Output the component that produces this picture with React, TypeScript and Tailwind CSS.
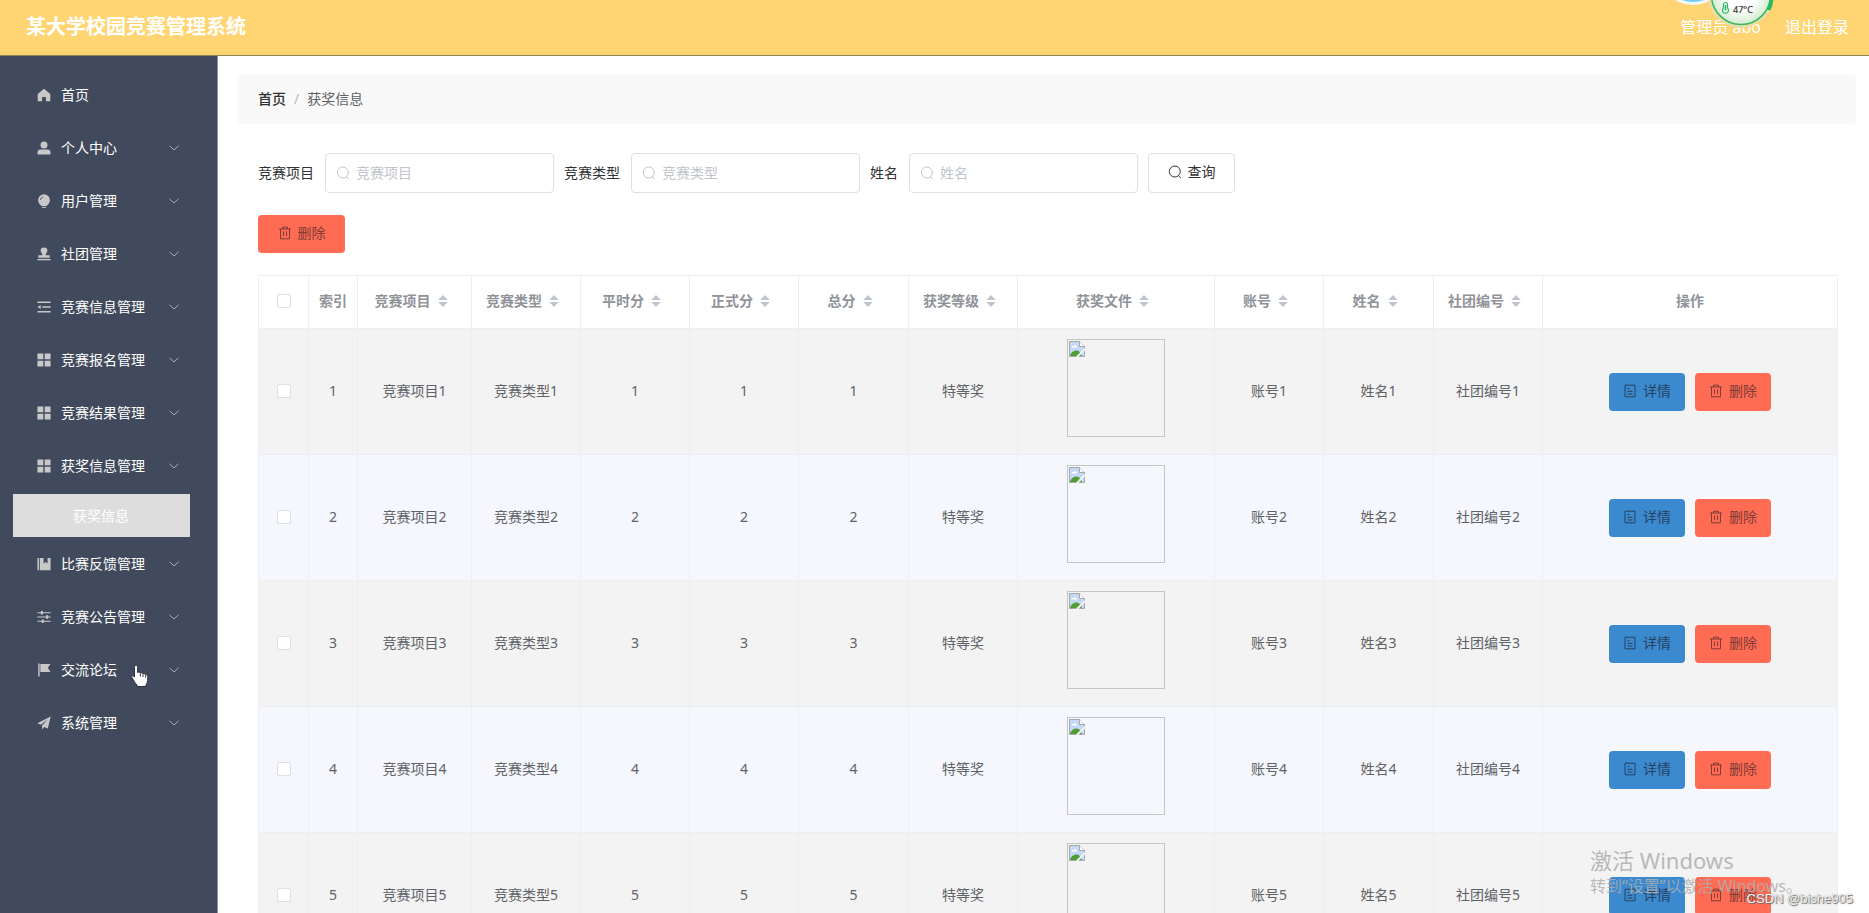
import { useState, type ReactNode } from 'react';

const CELL = 'border-r border-b border-[#ebeef5] px-2 pb-0.5 text-center';

const icons: Record<string, ReactNode> = {
  home: <path d="M8 .8.8 6.8V15H5.800V10.2H10.200V15H15.200V6.8Z" />,
  user: (
    <>
      <circle cx="8" cy="4.600" r="4" />
      <path d="M.600 15.400V12.600C.600 10.800 2 9.600 3.800 9.600H12.200C14 9.600 15.400 10.800 15.400 12.600V15.400Z" />
    </>
  ),
  bulb: (
    <>
      <path d="M8 .3a6.800 6.800 0 0 0-6.800 6.800c0 2.900 2 5 4.200 6.700h5.200c2.200-1.700 4.200-3.800 4.200-6.700A6.800 6.800 0 0 0 8 .3Z" />
      <path d="M5.600 14.600h4.800v1.200H5.600Z" />
      <path d="M4 6.800C4.200 5 5.400 3.800 7 3.500" fill="none" stroke="#414a5c" strokeWidth="1" />
    </>
  ),
  stamp: (
    <>
      <path d="M8 .5a3.900 3.900 0 0 0-3.900 3.900c0 1.800 2 2.900 2 4.700v.4H1.500v2.700h13V9.500H9.900v-.4c0-1.800 2-2.900 2-4.700A3.900 3.900 0 0 0 8 .5Z" />
      <path d="M.5 13.600h15V15.200H.5Z" />
    </>
  ),
  fold: (
    <>
      <path d="M.5 1.800h15v1.700H.5ZM6 7.200h9.500v1.700H6ZM.5 12.600h15v1.700H.5Z" />
      <path d="M.5 8 4.200 5.600v4.800Z" />
    </>
  ),
  grid: <path d="M.5.500h6.700v6.700H.5ZM8.800.500h6.700v6.700H8.800ZM.5 8.800h6.700v6.700H.5ZM8.800 8.800h6.700v6.700H8.800Z" />,
  book: <path d="M.5 1h1.700v14H.5ZM3.200 1h4.300v6.400l2.300-1.700 2.300 1.700V1h3.400v14H3.200Z" />,
  sliders: (
    <>
      <path d="M.5 2.600h15v1.200H.5ZM.5 7.400h15v1.200H.5ZM.5 12.200h15v1.200H.5Z" />
      <path d="M4.400 1.200h2.400v4H4.400ZM10.400 6h2.400v4h-2.400ZM5.400 10.800h2.400v4H5.400Z" />
    </>
  ),
  flag: <path d="M1.400.500H3v15H1.400ZM3.800 1h11.600L12.400 5.500l3 4.700H3.800Z" />,
  plane: <path d="M15.600.5.400 8.400l4 1.700L12.200 4 5.800 10.800v4.600l2.400-2.900 4.200 1.900Z" />,
};

const menu = [
  { icon: 'home', label: '首页' },
  { icon: 'user', label: '个人中心', sub: true },
  { icon: 'bulb', label: '用户管理', sub: true },
  { icon: 'stamp', label: '社团管理', sub: true },
  { icon: 'fold', label: '竞赛信息管理', sub: true },
  { icon: 'grid', label: '竞赛报名管理', sub: true },
  { icon: 'grid', label: '竞赛结果管理', sub: true },
  { icon: 'grid', label: '获奖信息管理', sub: true, child: '获奖信息' },
  { icon: 'book', label: '比赛反馈管理', sub: true },
  { icon: 'sliders', label: '竞赛公告管理', sub: true },
  { icon: 'flag', label: '交流论坛', sub: true },
  { icon: 'plane', label: '系统管理', sub: true },
];

const columns = [
  { label: '竞赛项目', width: 'w-[114px]' },
  { label: '竞赛类型', width: 'w-[109px]' },
  { label: '平时分', width: 'w-[109px]' },
  { label: '正式分', width: 'w-[109px]' },
  { label: '总分', width: 'w-[110px]' },
  { label: '获奖等级', width: 'w-[109px]' },
  { label: '获奖文件', width: 'w-[197px]' },
  { label: '账号', width: 'w-[109px]' },
  { label: '姓名', width: 'w-[110px]' },
  { label: '社团编号', width: 'w-[109px]' },
];

const rows = [1, 2, 3, 4, 5];

function SearchIcon() {
  return (
    <svg width="14" height="14" viewBox="0 0 14 14" fill="none" stroke="currentColor" className="shrink-0">
      <circle cx="6.800" cy="6.500" r="5.500" />
      <path d="M10.400 10.800 12.800 12.800" />
    </svg>
  );
}

function TrashIcon() {
  return (
    <svg width="14" height="14" viewBox="0 0 14 14" fill="none" stroke="currentColor" className="shrink-0">
      <path d="M1 3h12M4.500 3V1.200h5V3M2.500 3v9.800h9V3M5.500 5.500v4.500M8.500 5.500v4.500" />
    </svg>
  );
}

function DocIcon() {
  return (
    <svg width="14" height="14" viewBox="0 0 14 14" fill="none" stroke="currentColor" className="shrink-0">
      <path d="M2 1.200h10v11.600H2ZM4.500 4.500h2M4.500 7.300h5M4.500 10h5" />
    </svg>
  );
}

function SortIcon() {
  return (
    <svg width="10" height="12" viewBox="0 0 10 12" fill="#c0c4cc" className="shrink-0">
      <path d="M5 0 9.800 5H.2ZM5 12 .2 7h9.600Z" />
    </svg>
  );
}

function BrokenImage() {
  return (
    <div role="img" aria-label="获奖文件" className="mx-auto mb-1.5 h-[98px] w-[98px] border border-[#c5c5c5] p-px">
      <svg width="16" height="16" viewBox="0 0 16 16">
        <path d="M.5.500h10l5 5v10H.5Z" fill="#c5d8f5" stroke="#a5a8ad" />
        <path d="M10.500.500v5h5" fill="#fff" stroke="#a5a8ad" />
        <path d="M2.500 6.500c0-1.300 1.200-1.800 2-1.300.8-1.500 3-1 3 .5.800 0 .8.800.5.800Z" fill="#fff" />
        <path d="M1 15c1-4 4-5.500 6.500-5.500S12 11.500 13 15Z" fill="#4f9e35" />
        <path d="M8 16 16 8" stroke="#f3f3f3" strokeWidth="2" />
      </svg>
    </div>
  );
}

function SearchField({ id, label }: { id: string; label: string }) {
  return (
    <div className="flex items-center gap-[11px]">
      <label htmlFor={id} className="text-[#303133]">{label}</label>
      <div className="flex h-10 w-[229px] items-center gap-1.5 rounded border border-[#dcdfe6] bg-white px-2.5 text-[#c0c4cc]">
        <SearchIcon />
        <input
          id={id}
          type="text"
          placeholder={label}
          className="min-w-0 flex-1 bg-transparent text-[#606266] outline-none placeholder:text-[#c0c4cc]"
        />
      </div>
    </div>
  );
}

function Checkbox({ label, checked, onChange }: { label: string; checked: boolean; onChange: () => void }) {
  return (
    <input
      type="checkbox"
      aria-label={label}
      checked={checked}
      onChange={onChange}
      className="mx-auto block h-3.5 w-3.5 appearance-none rounded-xs border border-[#dcdfe6] bg-white checked:bg-[#3b89cf]"
    />
  );
}

// Desktop temperature gadget hanging off the top edge
function TemperatureGadget() {
  return (
    <svg width="120" height="32" viewBox="0 0 120 32" className="pointer-events-none absolute top-0 right-[89px]">
      <defs>
        <radialGradient id="gauge" cx="0.500" cy="0.500" r="0.500">
          <stop offset="0.500" stopColor="#ffffff" />
          <stop offset="1" stopColor="#d3edcf" />
        </radialGradient>
      </defs>
      <circle cx="33" cy="-30" r="35" fill="#f4f8fa" />
      <circle cx="33" cy="-30" r="32" fill="#6fcdf5" />
      <circle cx="81" cy="-5" r="33" fill="#ecdca6" />
      <circle cx="81" cy="-5" r="29.500" fill="url(#gauge)" stroke="#35b866" strokeWidth="1.500" />
      <path d="M111.500-5A30.500 30.500 0 0 1 108.500 10" fill="none" stroke="#25bd5b" strokeWidth="4" />
      <path d="M63.500 8V4.500a2 2 0 0 1 4 0V8a3 3 0 1 1-4 0Z" fill="none" stroke="#2fb765" strokeWidth="1.200" />
      <path d="M65.500 5v5.500" stroke="#2fb765" strokeWidth="1.500" />
      <text x="73" y="13" fontSize="9" fill="#333" stroke="#333" strokeWidth="0.200">47°C</text>
    </svg>
  );
}

function HandCursor() {
  return (
    <svg width="18" height="24" viewBox="0 0 18 24" className="pointer-events-none absolute top-[21px] left-[131px]">
      <path
        d="M5 1.500c1 0 1.600.700 1.600 1.600v5.500c.3-.800 2.500-.800 2.700.600.6-.800 2.500-.500 2.700.8.700-.700 2.300-.300 2.500.8.900-.300 2.200.300 2.200 1.700v4c0 2.500-2 3.500-2 6H6.500c-.5-2-2.500-3.500-3.500-5.500L.9 13.500c-.6-1.300.8-2.200 1.800-1.300l.8.900V3.100c0-.9.6-1.600 1.500-1.600Z"
        fill="#fff"
        stroke="#2b3040"
      />
      <path d="M9.300 9.500v3M12 10.500v2.500M14.500 11.500v2" stroke="#2b3040" fill="none" />
    </svg>
  );
}

export default function App() {
  const [selected, setSelected] = useState<number[]>([]);

  const toggle = (n: number) =>
    setSelected((prev) => (prev.includes(n) ? prev.filter((v) => v !== n) : [...prev, n]));
  const toggleAll = () => setSelected((prev) => (prev.length === rows.length ? [] : rows));

  return (
    <div className="relative flex h-screen flex-col overflow-hidden bg-white font-['Noto_Sans','Noto_Sans_CJK_SC',sans-serif] text-sm">
      <header className="relative flex h-14 shrink-0 items-center justify-between border-b border-[#8f8158] bg-[#ffd574] pr-5 pb-0.5 pl-[26px] text-white">
        <h1 className="text-xl font-bold">某大学校园竞赛管理系统</h1>
        <div className="flex gap-6 text-base">
          <span>管理员 abo</span>
          <a href="#logout">退出登录</a>
        </div>
        <TemperatureGadget />
      </header>

      <div className="flex min-h-0 flex-1">
        <nav className="w-[218px] shrink-0 border-r border-[#8a8f9b] bg-[#414a5c] pt-3 text-white">
          <ul>
            {menu.map((item) => (
              <li key={item.label} className="relative">
                <a href="#menu" className="flex h-[53px] items-center pr-[38px] pl-[37px]">
                  <svg width="14" height="14" viewBox="0 0 16 16" fill="#c8c8c8" className="mr-2.5 shrink-0">
                    {icons[item.icon]}
                  </svg>
                  <span className="flex-1">{item.label}</span>
                  {item.sub && (
                    <svg width="10" height="6" viewBox="0 0 10 6" fill="none" stroke="#a9adb5">
                      <path d="M.5.800 5 5 9.500.800" />
                    </svg>
                  )}
                </a>
                {item.child && (
                  <a href="#awards" className="mt-0.5 mr-[27px] ml-[13px] flex h-[43px] items-center bg-[#dddddd] pl-[60px]">
                    {item.child}
                  </a>
                )}
                {item.icon === 'flag' && <HandCursor />}
              </li>
            ))}
          </ul>
        </nav>

        <main className="min-w-0 flex-1 overflow-y-auto pt-[18px] pr-[13px] pl-5 [scrollbar-width:none]">
          <div className="flex h-[50px] items-center gap-2 rounded bg-[#f9f9f9] px-5">
            <a href="#home" className="font-medium text-[#303133]">首页</a>
            <span className="text-[#b5b9c2]">/</span>
            <span className="text-[#606266]">获奖信息</span>
          </div>

          <div className="px-5 pt-[29px]">
            <form className="flex gap-2.5" onSubmit={(e) => e.preventDefault()}>
              <SearchField id="project" label="竞赛项目" />
              <SearchField id="type" label="竞赛类型" />
              <SearchField id="name" label="姓名" />
              <button type="submit" className="flex h-10 w-[87px] items-center justify-center gap-1.5 rounded border border-[#dcdfe6] pb-0.5 text-[#303133]">
                <SearchIcon />
                查询
              </button>
            </form>

            <button type="button" className="mt-[22px] flex h-[38px] w-[87px] items-center justify-center gap-1.5 rounded bg-[#ff6b53] pb-0.5 text-[#7d3c36]">
              <TrashIcon />
              删除
            </button>

            <table className="mt-[22px] w-full table-fixed border-separate border-spacing-0 border-t border-l border-[#ebeef5] text-[#606266]">
              <thead>
                <tr className="h-[53px] text-[#909399]">
                  <th className={`${CELL} w-[50px]`}>
                    <Checkbox label="全选" checked={selected.length === rows.length} onChange={toggleAll} />
                  </th>
                  <th className={`${CELL} w-[49px]`}>索引</th>
                  {columns.map((col) => (
                    <th key={col.label} className={`${CELL} ${col.width}`}>
                      <span className="flex items-center justify-center gap-[7px] pr-[7px]">
                        {col.label}
                        <SortIcon />
                      </span>
                    </th>
                  ))}
                  <th className={`${CELL} w-[295px]`}>操作</th>
                </tr>
              </thead>
              <tbody>
                {rows.map((n) => (
                  <tr key={n} className="h-[126px] odd:bg-[#f3f3f3] even:bg-[#f5f7fc]">
                    <td className={CELL}>
                      <Checkbox label={`选择第${n}行`} checked={selected.includes(n)} onChange={() => toggle(n)} />
                    </td>
                    <td className={CELL}>{n}</td>
                    <td className={CELL}>竞赛项目{n}</td>
                    <td className={CELL}>竞赛类型{n}</td>
                    <td className={CELL}>{n}</td>
                    <td className={CELL}>{n}</td>
                    <td className={CELL}>{n}</td>
                    <td className={CELL}>特等奖</td>
                    <td className={CELL}>
                      <BrokenImage />
                    </td>
                    <td className={CELL}>账号{n}</td>
                    <td className={CELL}>姓名{n}</td>
                    <td className={CELL}>社团编号{n}</td>
                    <td className="border-r border-b border-[#ebeef5] px-2">
                      <div className="flex justify-center gap-2.5">
                        <button type="button" className="flex h-[38px] w-[76px] items-center justify-center gap-1.5 rounded bg-[#3b89cf] pb-0.5 text-[#27435f]">
                          <DocIcon />
                          详情
                        </button>
                        <button type="button" className="flex h-[38px] w-[76px] items-center justify-center gap-1.5 rounded bg-[#ff6b53] pb-0.5 text-[#7d3c36]">
                          <TrashIcon />
                          删除
                        </button>
                      </div>
                    </td>
                  </tr>
                ))}
              </tbody>
            </table>
          </div>
        </main>
      </div>

      <div className="pointer-events-none absolute right-[67px] bottom-[15px] text-[#aeaeae]/85">
        <p className="text-[22px] leading-7">激活 Windows</p>
        <p className="text-base leading-6">转到“设置”以激活 Windows。</p>
      </div>
      <p className="pointer-events-none absolute right-4 bottom-1 font-['Liberation_Sans',sans-serif] text-[13px] text-[#f4f4f4] [text-shadow:1px_1px_1px_#666,0_0_1px_#777]">
        CSDN @bishe905
      </p>
    </div>
  );
}
